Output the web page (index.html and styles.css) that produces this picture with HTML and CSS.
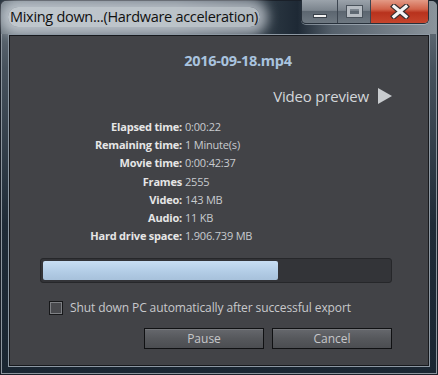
FILE: index.html
```html
<!DOCTYPE html>
<html lang="en">
<head>
    <meta charset="UTF-8">
    <meta name="viewport" content="width=device-width, initial-scale=1.0">
    <title>Mixing down</title>

    <link rel="stylesheet" href="styles.css">
</head>
<body>
    <div class="window">
        <div class="titlebar">
            <span class="title">Mixing down...(Hardware acceleration)</span>
            <div class="caption-btns">
                <div class="cbtn min"><span class="bar"></span></div>
                <div class="cbtn max"><span class="box"></span></div>
                <div class="cbtn close">
                    <svg width="20" height="15" viewBox="0 0 20 15">
                        <path d="M4 2.5 L16 12.5 M16 2.5 L4 12.5" stroke="#3a3030" stroke-width="5.6" stroke-linecap="square"/>
                        <path d="M4 2.5 L16 12.5 M16 2.5 L4 12.5" stroke="#f4f4f4" stroke-width="3.2" stroke-linecap="square"/>
                    </svg>
                </div>
            </div>
        </div>

        <div class="client">
            <div class="filename">2016-09-18.mp4</div>

            <div class="preview">
                <span>Video preview</span>
                <svg width="16" height="16" viewBox="0 0 16 16"><path d="M1 0 L15 8 L1 16 Z" fill="#c9cccf"/></svg>
            </div>

            <div class="info">
                <div class="lbl">Elapsed time:</div><div class="val">0:00:22</div>
                <div class="lbl">Remaining time:</div><div class="val">1 Minute(s)</div>
                <div class="lbl">Movie time:</div><div class="val">0:00:42:37</div>
                <div class="lbl">Frames</div><div class="val">2555</div>
                <div class="lbl">Video:</div><div class="val">143 MB</div>
                <div class="lbl">Audio:</div><div class="val">11 KB</div>
                <div class="lbl">Hard drive space:</div><div class="val">1.906.739 MB</div>
            </div>

            <div class="progress">
                <div class="fill" style="width: 68%;"></div>
            </div>

            <label class="check">
                <span class="box"></span>
                <span>Shut down PC automatically after successful export</span>
            </label>

            <div class="actions">
                <button class="btn">Pause</button>
                <button class="btn">Cancel</button>
            </div>
        </div>
    </div>
</body>
</html>
```

FILE: styles.css
```css
*{
    margin: 0;
    padding: 0;
    box-sizing: border-box;
}
body{
    width: 438px;
    height: 375px;
    overflow: hidden;
    background: #1b2631;
    font-family: "Open Sans", "Noto Sans", sans-serif;
}
.window{
    width: 438px;
    height: 375px;
    display: flex;
    flex-direction: column;
    border: 1px solid #1a2029;
    border-radius: 6px 6px 0 0;
    background: linear-gradient(to bottom, #6d7780 0%, #47525d 18%, #1f2b37 60%, #1a2632 100%);
    box-shadow: inset 0 0 0 1px #8c959e;
}
.titlebar{
    height: 33px;
    display: flex;
    align-items: flex-start;
    justify-content: space-between;
    padding-left: 7px;
    padding-right: 8px;
    background: linear-gradient(to right, #6f7a83 0%, #5d6872 40%, #2a3641 62%, #1e2935 68%, #55606b 76%, #8b949c 100%);
    border-radius: 6px 6px 0 0;
}
.title{
    margin-top: 6px;
    font-family: "Open Sans", sans-serif;
    font-size: 14.5px;
    letter-spacing: -0.3px;
    color: #101010;
    padding: 0 2px;
    border-radius: 12px;
    background: rgba(214, 220, 226, 0.78);
    box-shadow: 0 0 12px 8px rgba(214, 220, 226, 0.7);
    line-height: 20px;
}
.caption-btns{
    display: flex;
    border: 1px solid #27303a;
    border-top: none;
    border-radius: 0 0 5px 5px;
    overflow: hidden;
    height: 24px;
    margin-top: -1px;
    box-shadow: 0 1px 0 rgba(200, 210, 220, 0.5);
}
.cbtn{
    height: 23px;
    display: flex;
    align-items: center;
    justify-content: center;
    border-right: 1px solid #3c4550;
}
.min, .max{
    background: linear-gradient(to bottom, #9ba3ab 0%, #7b848d 45%, #5c6670 50%, #6e7881 100%);
}
.min{
    width: 36px;
}
.min .bar{
    width: 14px;
    height: 4px;
    background: #f2f2f2;
    border: 1px solid #39414a;
    margin-top: 9px;
}
.max{
    width: 33px;
}
.max .box{
    width: 15px;
    height: 11px;
    border: 3px solid #b6bcc2;
    outline: 1px solid #4a535c;
}
.close{
    width: 57px;
    border-right: none;
    background: linear-gradient(to bottom, #e39a86 0%, #d1634a 40%, #b8321d 55%, #c6452c 100%);
}
.client{
    flex: 1;
    margin: 0 7px 7px 7px;
    display: flex;
    flex-direction: column;
    background: #424347;
    border: 1px solid #8d98a3;
    box-shadow: inset 0 0 0 1px #17191d;
    font-family: "Open Sans", "Noto Sans", sans-serif;
}
.filename{
    margin-top: 16px;
    margin-left: 38px;
    text-align: center;
    font-weight: bold;
    font-size: 14.5px;
    color: #a9c3df;
    letter-spacing: -0.3px;
}
.preview{
    margin-top: 16px;
    align-self: flex-end;
    margin-right: 36px;
    display: flex;
    align-items: center;
    gap: 8px;
    font-size: 15px;
    color: #d3d6da;
    letter-spacing: -0.2px;
}
.info{
    margin-top: 12px;
    display: grid;
    grid-template-columns: 173px auto;
    column-gap: 3px;
    font-size: 11px;
    line-height: 18.2px;
    letter-spacing: -0.2px;
}
.lbl{
    text-align: right;
    font-weight: bold;
    color: #e6e6e6;
}
.val{
    color: #c8cbcf;
}
.progress{
    margin: 13px 37px 0 31px;
    height: 25px;
    background: #333438;
    border: 1px solid #26272a;
    border-radius: 3px;
    padding: 2px;
}
.fill{
    height: 100%;
    border-radius: 2px;
    background: linear-gradient(to bottom, #c8def3 0%, #b3cde6 55%, #a7c1db 100%);
}
.check{
    margin: 16px 0 0 40px;
    display: flex;
    align-items: center;
    gap: 7px;
    font-size: 12px;
    color: #c8c9cc;
    letter-spacing: -0.1px;
}
.check .box{
    width: 14px;
    height: 14px;
    border: 1px solid #161719;
    background: #48494d;
    box-shadow: inset 0 0 0 1px #7e8084;
}
.actions{
    margin: 12px 37px 0 0;
    display: flex;
    justify-content: flex-end;
    gap: 8px;
}
.btn{
    width: 120px;
    height: 21px;
    border: 1px solid #101113;
    background: linear-gradient(to bottom, #66686d 0%, #56585c 50%, #4b4d51 100%);
    box-shadow: inset 0 1px 0 #75777b;
    color: #c6c7ca;
    font-family: "Open Sans", sans-serif;
    font-size: 12px;
}
```
